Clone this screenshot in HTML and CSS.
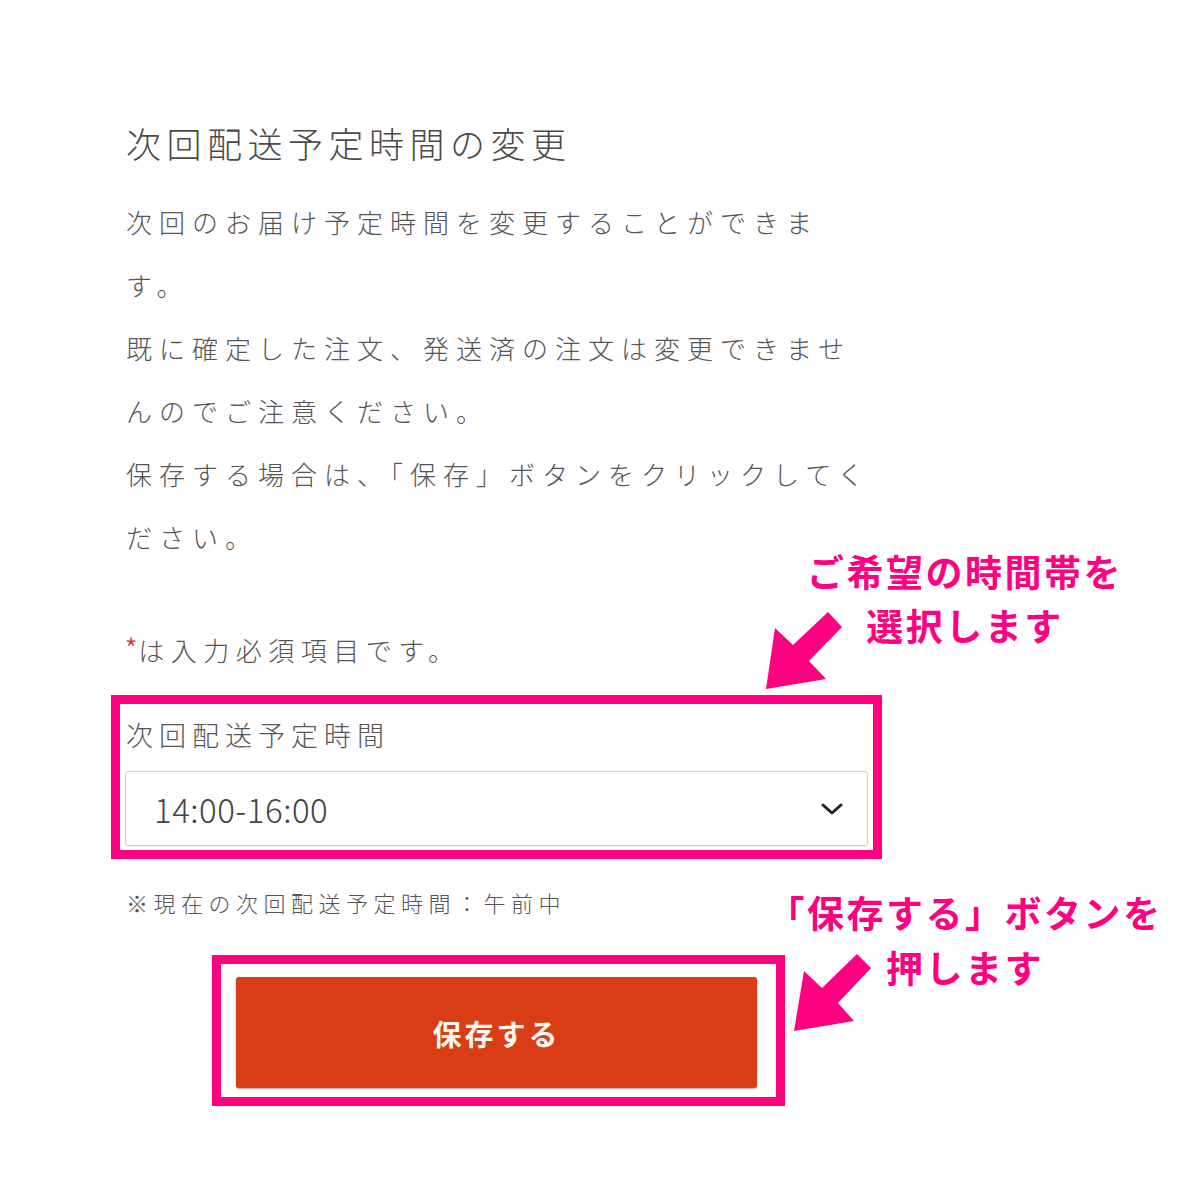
FILE: index.html
```html
<!DOCTYPE html>
<html lang="ja">
<head>
  <meta charset="UTF-8">
  <title>次回配送予定時間の変更</title>
  <link rel="stylesheet" href="styles.css">
</head>
<body>
  <div class="page">
    <h1 class="title">次回配送予定時間の変更</h1>
    <p class="intro">
      次回のお届け予定時間を変更することができま<br>す。<br>
      既に確定した注文、発送済の注文は変更できませ<br>んのでご注意ください。<br>
      保存する場合は、「保存」ボタンをクリックしてく<br>ださい。
    </p>

    <p class="required"><span class="mark">*</span>は入力必須項目です。</p>

    <div class="highlight field-box">
      <div class="field-label">次回配送予定時間</div>
      <div class="select">
        <span class="select-value">14:00-16:00</span>
        <svg class="chevron" width="22" height="12" viewBox="0 0 22 12">
          <polyline points="2,2 11,10 20,2" fill="none" stroke="#222" stroke-width="3" stroke-linecap="round" stroke-linejoin="round"/>
        </svg>
      </div>
    </div>

    <p class="note">※現在の次回配送予定時間：午前中</p>

    <div class="highlight button-box">
      <button class="save-btn" type="button">保存する</button>
    </div>
  </div>

  <!-- annotations drawn over the screenshot -->
  <div class="callout callout-select">ご希望の時間帯を<br>選択します</div>
  <svg class="arrow arrow-select" width="90" height="90" viewBox="0 0 90 90">
    <polygon points="6,84 15,23 33,40 68,7 82,22 49,56 66,74" fill="#ff0080"/>
  </svg>

  <div class="callout callout-save">「保存する」ボタンを<br>押します</div>
  <svg class="arrow arrow-save" width="90" height="90" viewBox="0 0 90 90">
    <polygon points="6,83 16,23 34,40 69,6 83,20 50,55 66,73" fill="#ff0080"/>
  </svg>
</body>
</html>
```

FILE: styles.css
```css
body {
  margin: 0;
  background: #fff;
  color: #555;
  font-family: "Noto Sans CJK JP", "Noto Sans", sans-serif;
  font-weight: 300;
  position: relative;
  min-height: 1200px;
}
.page {
  width: 771px;
  margin-left: 111px;
  padding-top: 118px;
}
.title {
  margin: 0;
  padding-left: 15px;
  font-size: 35px;
  font-weight: 300;
  line-height: 50px;
  letter-spacing: 5.5px;
  color: #4a4a4a;
}
.intro {
  margin: 22px 0 0;
  padding-left: 15px;
  font-size: 26px;
  line-height: 63px;
  letter-spacing: 7px;
  white-space: nowrap;
}
.required {
  margin: 62px 0 0;
  padding-left: 14px;
  font-size: 26px;
  line-height: 40px;
  letter-spacing: 6.5px;
}
.mark {
  color: #d0453a;
  font-size: 26px;
  font-weight: 400;
  vertical-align: top;
  line-height: 34px;
  letter-spacing: 1px;
}
.highlight {
  border: 9px solid #ff0080;
}
.field-box {
  margin-top: 25px;
  padding: 11px 5px 4px;
}
.field-label {
  padding-left: 1px;
  font-size: 27px;
  line-height: 40px;
  letter-spacing: 6px;
}
.select {
  margin-top: 16px;
  height: 73px;
  border: 1px solid #cfcfcf;
  border-radius: 3px;
  display: flex;
  align-items: center;
  justify-content: space-between;
  padding: 0 24px 0 28px;
  box-shadow: 0 1px 1px rgba(0, 0, 0, 0.08);
}
.select-value {
  font-size: 33px;
  color: #444;
  letter-spacing: 0.5px;
}
.note {
  margin: 28px 0 0;
  padding-left: 15px;
  font-size: 22px;
  line-height: 30px;
  letter-spacing: 5.5px;
}
.button-box {
  width: 521px;
  margin: 38px 0 0 101px;
  padding: 13px 19px 9px 15px;
}
.save-btn {
  display: block;
  width: 521px;
  height: 111px;
  border: none;
  border-radius: 3px;
  background: #d83d15;
  color: #fbf6f2;
  font-family: inherit;
  font-size: 29px;
  font-weight: 700;
  letter-spacing: 3px;
  box-shadow: 0 1px 2px rgba(0, 0, 0, 0.35);
}
.callout {
  position: absolute;
  width: 400px;
  text-align: center;
  color: #ff0080;
  font-size: 37px;
  font-weight: 700;
  line-height: 54px;
  letter-spacing: 2.5px;
}
.callout-select {
  left: 765px;
  top: 544px;
}
.callout-save {
  left: 765px;
  top: 885px;
  line-height: 55px;
}
.arrow {
  position: absolute;
}
.arrow-select {
  left: 760px;
  top: 605px;
}
.arrow-save {
  left: 788px;
  top: 948px;
}
```
